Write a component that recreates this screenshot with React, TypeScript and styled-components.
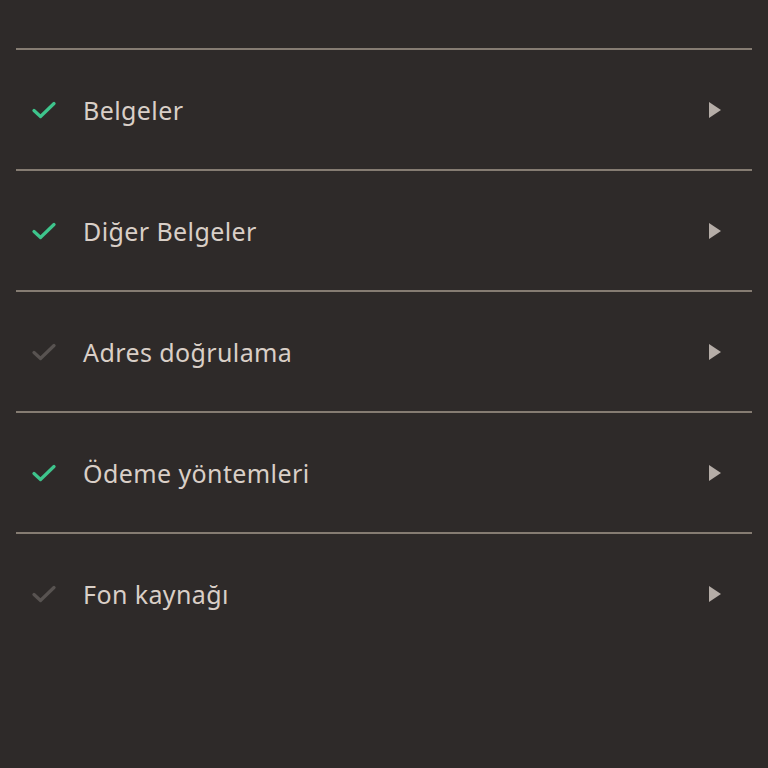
import styled, { createGlobalStyle } from 'styled-components'

const items = [
  { label: 'Belgeler', done: true },
  { label: 'Diğer Belgeler', done: true },
  { label: 'Adres doğrulama', done: false },
  { label: 'Ödeme yöntemleri', done: true },
  { label: 'Fon kaynağı', done: false },
]

export default function App() {
  return (
    <>
      <GlobalStyle />
      <Page>
        <List>
          {items.map((item) => (
            <Row key={item.label}>
              <Check $done={item.done} viewBox="0 0 24 18">
                <path d="M2 9.5 L8.5 15.5 L22 2.5" />
              </Check>
              <Label>{item.label}</Label>
              <Arrow viewBox="0 0 14 18">
                <path d="M1 1 L13 9 L1 17 Z" />
              </Arrow>
            </Row>
          ))}
        </List>
      </Page>
    </>
  )
}

const GlobalStyle = createGlobalStyle`
  html, body {
    margin: 0;
    background: #2e2a29;
  }
`

const Page = styled.div`
  min-height: 768px;
  box-sizing: border-box;
  padding: 48px 16px 0;
  background: #2e2a29;
  font-family: 'Noto Sans', sans-serif;
`

const List = styled.div`
  display: flex;
  flex-direction: column;
`

const Row = styled.div`
  display: flex;
  align-items: center;
  height: 121px;
  box-sizing: border-box;
  border-top: 2px solid #857c72;
  padding: 0 30px 0 16px;
`

const Check = styled.svg<{ $done: boolean }>`
  width: 24px;
  height: 18px;
  flex: none;
  fill: none;
  stroke: ${(p) => (p.$done ? '#3ec48c' : '#585351')};
  stroke-width: 3.2;
  stroke-linecap: round;
  stroke-linejoin: round;
`

const Label = styled.span`
  flex: 1;
  margin-left: 27px;
  font-size: 25px;
  color: #d9cfc7;
  letter-spacing: 0.4px;
`

const Arrow = styled.svg`
  width: 14px;
  height: 18px;
  flex: none;
  fill: #b5ada7;
`
